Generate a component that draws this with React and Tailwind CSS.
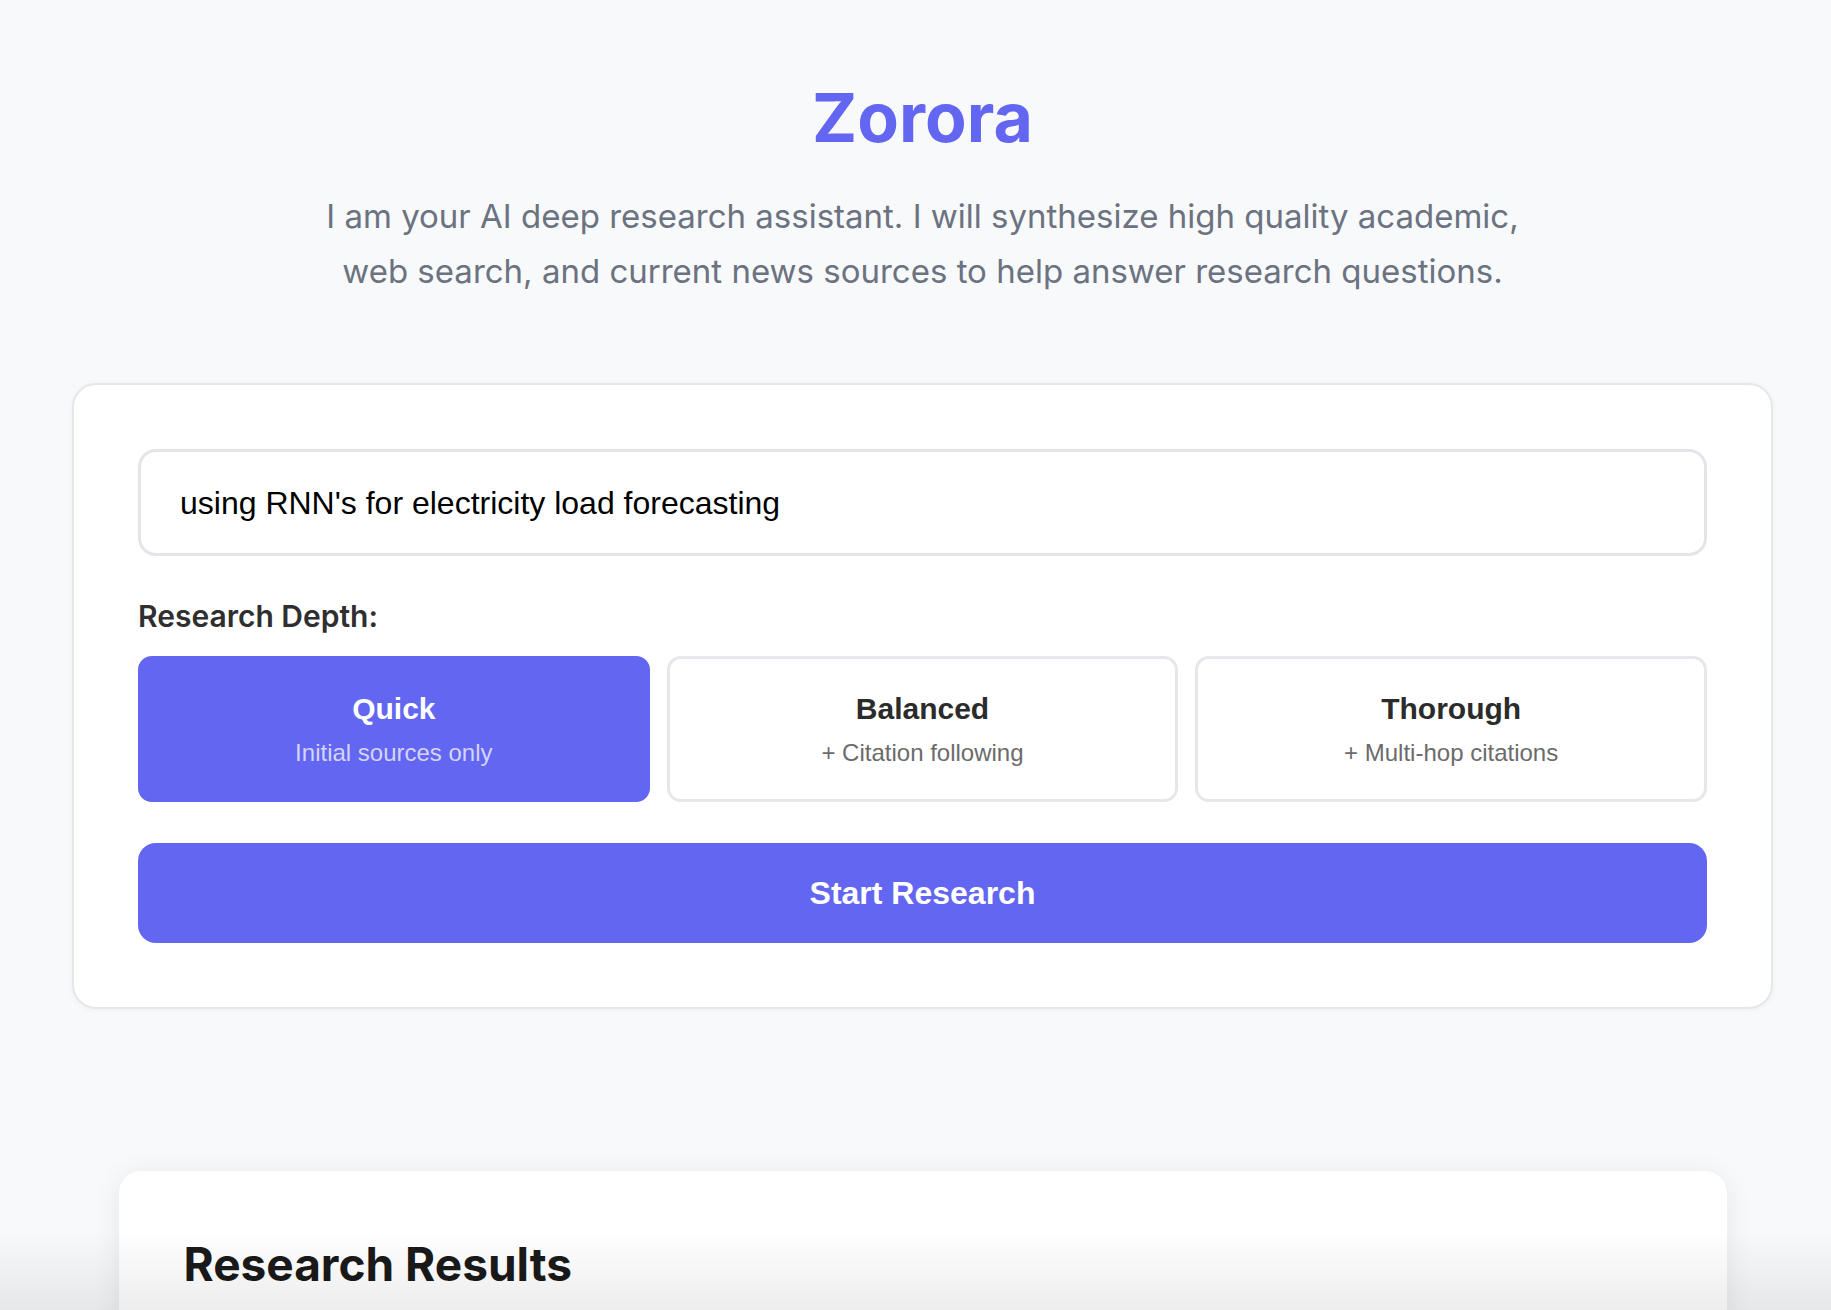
import React from "react";

const sans = { fontFamily: "Inter, 'Noto Sans', sans-serif" };

function Option({ title, sub, active }) {
  return (
    <button
      type="button"
      className={
        "flex h-[146px] flex-col items-center justify-center rounded-[14px] border-[3px] font-['Liberation_Sans',Arial,sans-serif] " +
        (active
          ? "border-[#6366f1] bg-[#6366f1] text-white"
          : "border-[#e5e7eb] bg-white text-[#2b2b2b]")
      }
    >
      <span className="text-[30px] font-bold leading-[34px]">{title}</span>
      <span
        className={
          "mt-[13px] text-[24px] leading-[28px] " +
          (active ? "text-[#d4d5fb]" : "text-[#6b6b6b]")
        }
      >
        {sub}
      </span>
    </button>
  );
}

export default function App() {
  return (
    <div
      className="min-h-screen bg-[#f8f9fb] pl-[14px] font-['Inter','Noto_Sans',sans-serif]"
      style={sans}
    >
      <div className="mx-auto flex w-[1701px] flex-col items-center pt-[82px]">
        <h1 className="text-[68px] font-bold leading-[70px] text-[#6366f1]">
          Zorora
        </h1>
        <p className="mt-[37px] max-w-[1230px] text-center text-[33px] leading-[55px] text-[#6b7280]">
          I am your AI deep research assistant. I will synthesize high quality
          academic, web search, and current news sources to help answer
          research questions.
        </p>

        <div className="mt-[84px] w-full rounded-[24px] border-2 border-[#e6e7eb] bg-white p-[64px] shadow-[0_1px_6px_rgba(0,0,0,0.04)]">
          <div className="flex h-[107px] items-center rounded-[18px] border-[3px] border-[#e4e5ea] pl-[39px]">
            <span className="font-['Liberation_Sans',Arial,sans-serif] text-[32px] text-black">
              using RNN's for electricity load forecasting
            </span>
          </div>

          <div className="mt-[43px] text-[30px] font-semibold leading-[35px] text-[#2f2f2f]">
            Research Depth:
          </div>

          <div className="mt-[22px] grid grid-cols-3 gap-[17px]">
            <Option title="Quick" sub="Initial sources only" active />
            <Option title="Balanced" sub="+ Citation following" />
            <Option title="Thorough" sub="+ Multi-hop citations" />
          </div>

          <button
            type="button"
            className="mt-[41px] flex h-[100px] w-full items-center justify-center rounded-[18px] bg-[#6366f1] font-['Liberation_Sans',Arial,sans-serif] text-[32px] font-bold text-white"
          >
            Start Research
          </button>
        </div>

        <div className="mt-[162px] h-[400px] w-[1608px] rounded-[22px] bg-white px-[65px] pt-[66px] shadow-[0_4px_28px_rgba(0,0,0,0.08)]">
          <h2 className="text-[46px] font-bold leading-[54px] text-[#1a1a1a]">
            Research Results
          </h2>
        </div>
      </div>

      <div className="pointer-events-none fixed bottom-0 left-0 right-0 h-[80px] bg-gradient-to-b from-transparent to-[rgba(0,0,0,0.07)]" />
    </div>
  );
}
